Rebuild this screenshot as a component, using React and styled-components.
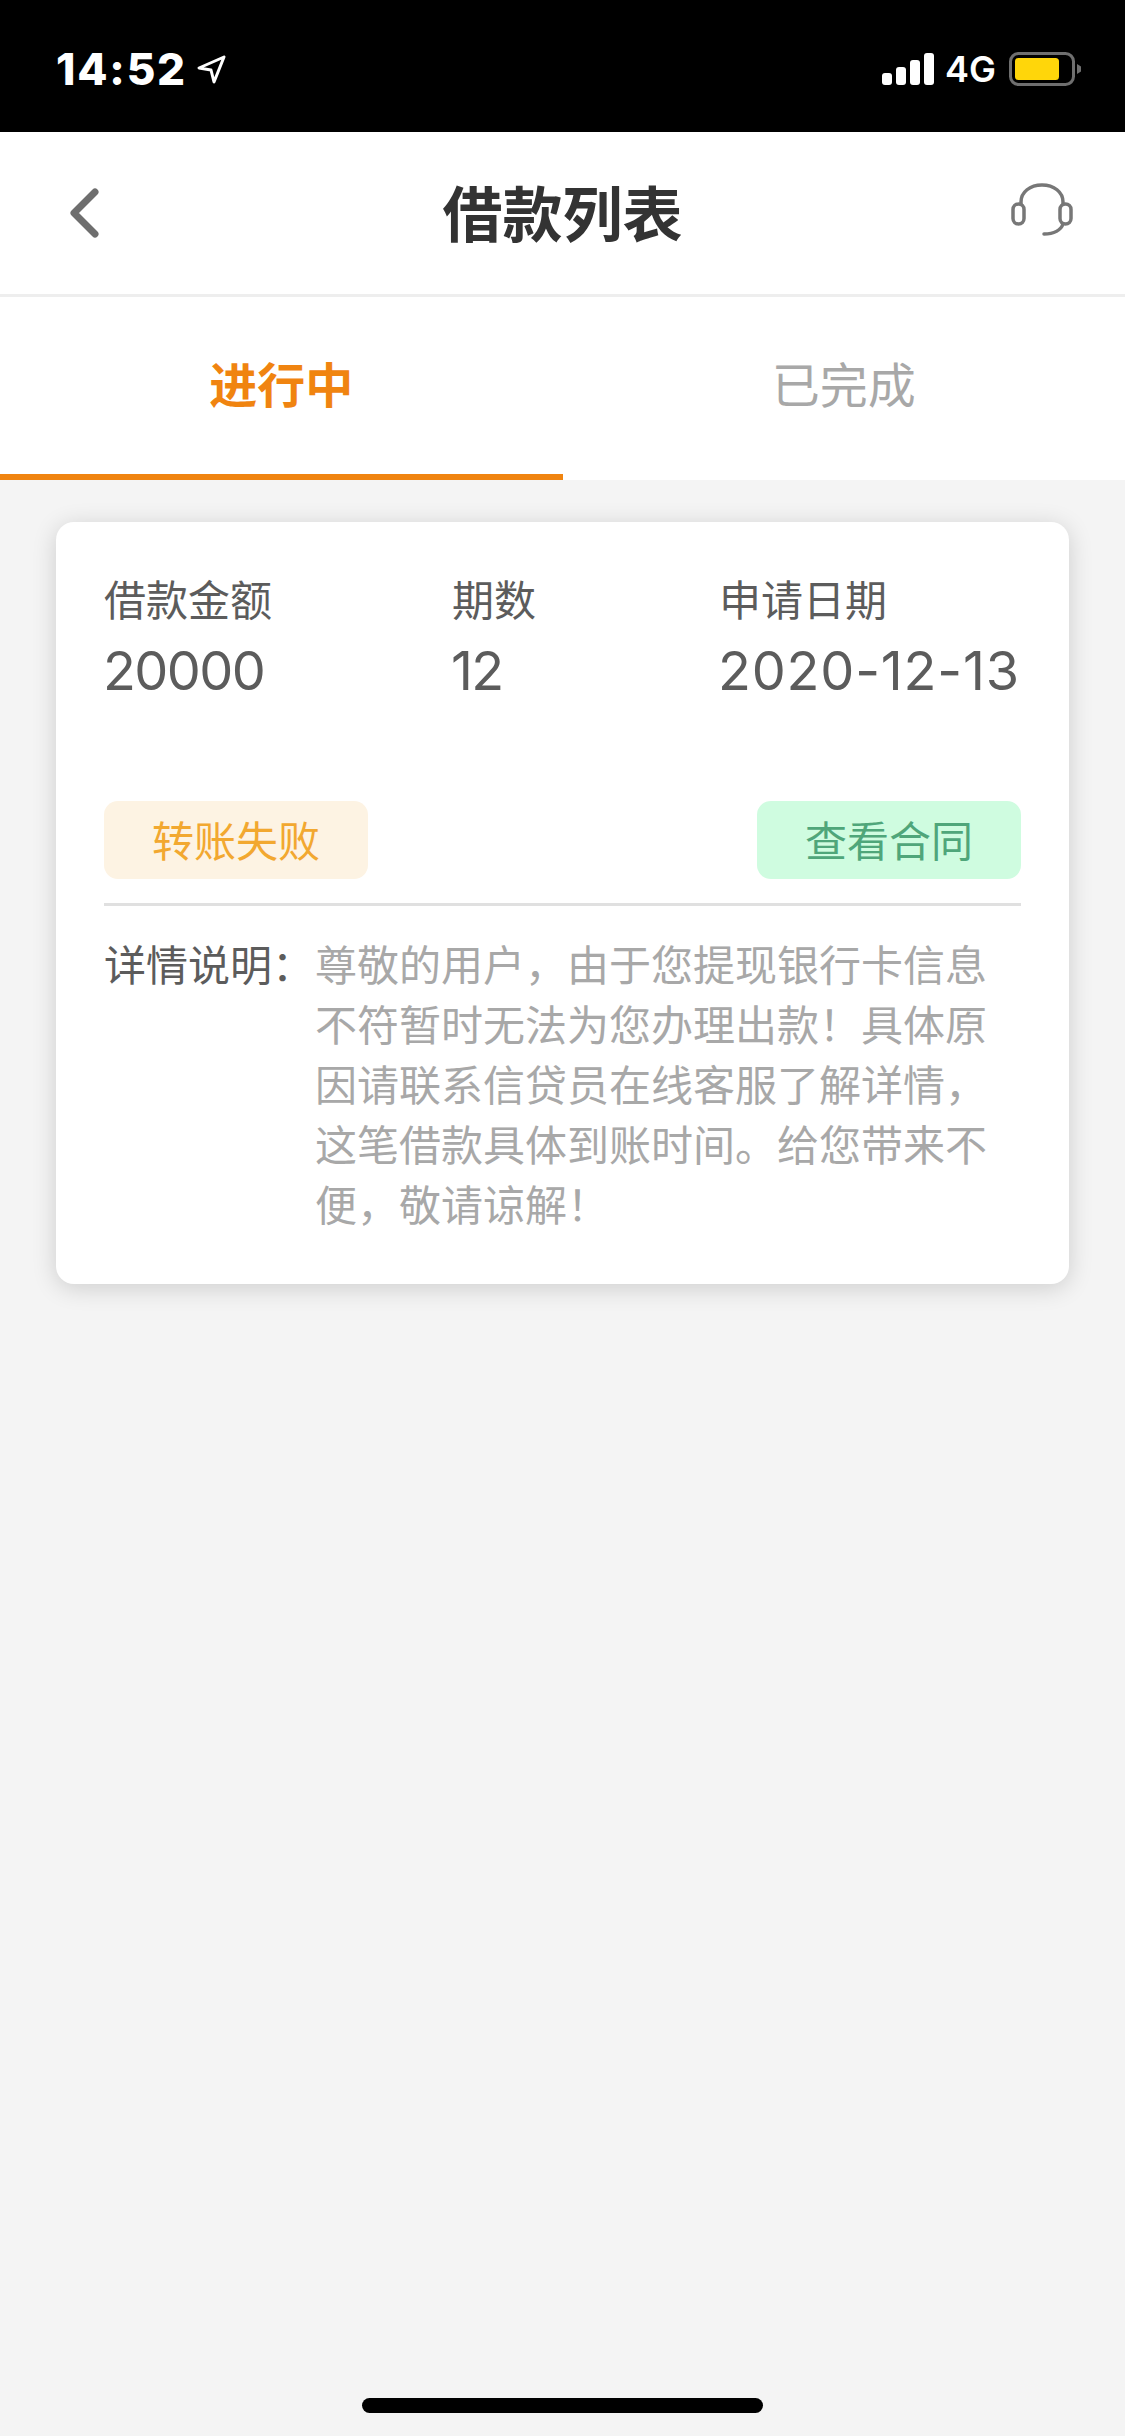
import styled, { createGlobalStyle } from 'styled-components';

const GlobalStyle = createGlobalStyle`
    html, body {
        margin: 0;
        padding: 0;
        background: #f4f4f4;
    }
    * {
        box-sizing: border-box;
    }
`;

const fields = [
    { label: '借款金额', value: '20000', spacing: -1.6 },
    { label: '期数', value: '12', spacing: -1.6 },
    { label: '申请日期', value: '2020-12-13', spacing: 0.8 },
];

const description = '尊敬的用户，由于您提现银行卡信息不符暂时无法为您办理出款！具体原因请联系信贷员在线客服了解详情，这笔借款具体到账时间。给您带来不便，敬请谅解！';

export default function App() {
    return (
        <Page>
            <GlobalStyle />
            <StatusBar>
                <TimeGroup>
                    <Time>14:52</Time>
                    <svg width="31" height="31" viewBox="0 0 31 31" fill="none">
                        <path d="M28 3 L3 14 L15 16 L18 28 Z" stroke="#fff" strokeWidth="3" strokeLinejoin="round" />
                    </svg>
                </TimeGroup>
                <StatusRight>
                    <svg width="52" height="32" viewBox="0 0 52 32" fill="#fff">
                        <rect x="0" y="20" width="10" height="12" rx="3" />
                        <rect x="14" y="14" width="10" height="18" rx="3" />
                        <rect x="28" y="7" width="10" height="25" rx="3" />
                        <rect x="42" y="0" width="10" height="32" rx="3" />
                    </svg>
                    <Network>4G</Network>
                    <svg width="73" height="34" viewBox="0 0 73 34" fill="none">
                        <rect x="1.5" y="1.5" width="63" height="31" rx="8" stroke="#6f6f6f" strokeWidth="3" />
                        <rect x="6" y="6" width="44" height="22" rx="3.5" fill="#ffd60a" />
                        <path d="M68 12 L72 14.5 V19.5 L68 22 Z" fill="#6f6f6f" />
                    </svg>
                </StatusRight>
            </StatusBar>
            <Header>
                <BackIcon width="32" height="54" viewBox="0 0 32 54" fill="none">
                    <path d="M27 6 L6 27 L27 48" stroke="#6e6e6e" strokeWidth="7" strokeLinecap="round" strokeLinejoin="round" />
                </BackIcon>
                <Title>借款列表</Title>
                <ServiceIcon width="62" height="54" viewBox="0 0 62 54" fill="none" stroke="#777" strokeWidth="3.5" strokeLinecap="round">
                    <path d="M10 21 V19 C10 9 19 2 31 2 C43 2 52 9 52 19 V21" />
                    <rect x="2" y="21" width="11" height="20" rx="5.5" />
                    <rect x="49" y="21" width="11" height="20" rx="5.5" />
                    <path d="M52 41 C50 47 43 51 33 51" />
                </ServiceIcon>
            </Header>
            <Tabs>
                <Tab $active>进行中</Tab>
                <Tab>已完成</Tab>
            </Tabs>
            <Content>
                <Card>
                    <Fields>
                        {fields.map(({ label, value, spacing }) => (
                            <Field key={label}>
                                <FieldLabel>{label}</FieldLabel>
                                <FieldValue $spacing={spacing}>{value}</FieldValue>
                            </Field>
                        ))}
                    </Fields>
                    <Actions>
                        <Badge $background="#fdf3e3" $color="#f2a830">转账失败</Badge>
                        <Badge $background="#cffce0" $color="#4fa67a">查看合同</Badge>
                    </Actions>
                    <Details>
                        <DetailsLabel>详情说明：</DetailsLabel>
                        <DetailsText>{description}</DetailsText>
                    </Details>
                </Card>
            </Content>
            <HomeIndicator />
        </Page>
    );
}

const Page = styled.div`
    width: 1125px;
    height: 2436px;
    position: relative;
    display: flex;
    flex-direction: column;
    overflow: hidden;
    background: #f4f4f4;
    font-family: "Liberation Sans", "Noto Sans CJK SC", sans-serif;
`;

const StatusBar = styled.div`
    height: 132px;
    padding: 52px 43px 0 56px;
    display: flex;
    align-items: flex-start;
    justify-content: space-between;
    background: #000;
`;

const TimeGroup = styled.div`
    display: flex;
    align-items: center;
    gap: 9px;
`;

const Time = styled.span`
    font-family: Inter, "Liberation Sans", sans-serif;
    font-size: 44px;
    line-height: 34px;
    font-weight: 800;
    letter-spacing: 1.8px;
    color: #fff;
`;

const StatusRight = styled.div`
    display: flex;
    align-items: center;
    gap: 12px;
`;

const Network = styled.span`
    margin-left: -1px;
    margin-right: 1px;
    font-family: Inter, "Liberation Sans", sans-serif;
    font-size: 36px;
    line-height: 34px;
    font-weight: 600;
    color: #fff;
`;

const Header = styled.header`
    height: 165px;
    padding: 0 52px;
    display: grid;
    grid-template-columns: 1fr auto 1fr;
    align-items: center;
    background: #fff;
    border-bottom: 3px solid #eeeeee;
`;

const BackIcon = styled.svg`
    justify-self: start;
    margin-left: 16px;
`;

const ServiceIcon = styled.svg`
    justify-self: end;
    margin-bottom: 6px;
`;

const Title = styled.h1`
    margin: 0 0 6px;
    font-size: 60px;
    font-weight: 700;
    color: #333;
`;

const Tabs = styled.nav`
    height: 183px;
    display: flex;
    background: #fff;
`;

const Tab = styled.div`
    flex: 1;
    display: flex;
    align-items: center;
    justify-content: center;
    padding-bottom: 8px;
    font-size: 48px;
    font-weight: ${({ $active }) => ($active ? 700 : 400)};
    color: ${({ $active }) => ($active ? '#f08410' : '#a8a8a8')};
    border-bottom: 6px solid ${({ $active }) => ($active ? '#f08410' : 'transparent')};
`;

const Content = styled.main`
    flex: 1;
    padding: 42px 56px 0;
`;

const Card = styled.section`
    height: 762px;
    padding: 52px 48px 0;
    border-radius: 18px;
    background: #fff;
    box-shadow: 0 4px 24px rgba(0, 0, 0, 0.16);
`;

const Fields = styled.div`
    display: grid;
    grid-template-columns: 348px 267px 1fr;
`;

const Field = styled.div`
    display: flex;
    flex-direction: column;
`;

const FieldLabel = styled.span`
    font-size: 42px;
    line-height: 56px;
    color: #5c5c5c;
`;

const FieldValue = styled.span`
    margin-top: 11px;
    margin-left: -1px;
    font-family: Inter, "Liberation Sans", sans-serif;
    font-size: 54px;
    line-height: 60px;
    letter-spacing: ${({ $spacing }) => $spacing}px;
    color: #5c5c5c;
    white-space: nowrap;
`;

const Actions = styled.div`
    margin-top: 100px;
    padding-bottom: 24px;
    display: flex;
    justify-content: space-between;
    border-bottom: 3px solid #e0e0e0;
`;

const Badge = styled.span`
    width: 264px;
    height: 78px;
    padding-bottom: 4px;
    display: flex;
    align-items: center;
    justify-content: center;
    border-radius: 14px;
    font-size: 42px;
    background: ${({ $background }) => $background};
    color: ${({ $color }) => $color};
`;

const Details = styled.div`
    margin-top: 31px;
    display: grid;
    grid-template-columns: 211px 1fr;
    font-size: 42px;
    line-height: 60px;
`;

const DetailsLabel = styled.span`
    color: #5c5c5c;
    white-space: nowrap;
`;

const DetailsText = styled.p`
    margin: 0;
    color: #a8a8a8;
`;

const HomeIndicator = styled.div`
    position: absolute;
    left: 362px;
    bottom: 23px;
    width: 401px;
    height: 15px;
    border-radius: 8px;
    background: #000;
`;
